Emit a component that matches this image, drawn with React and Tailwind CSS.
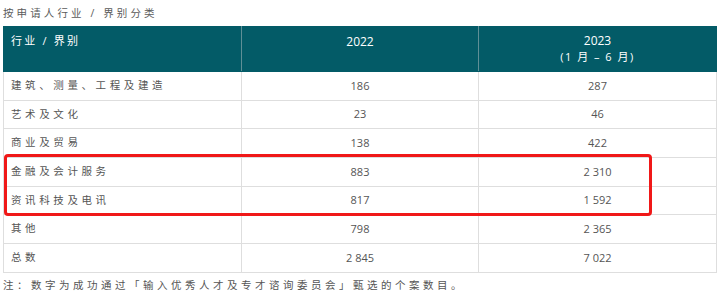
const rows = [
  { name: '建筑、测量、工程及建造', y2022: '186', y2023: '287' },
  { name: '艺术及文化', y2022: '23', y2023: '46' },
  { name: '商业及贸易', y2022: '138', y2023: '422' },
  { name: '金融及会计服务', y2022: '883', y2023: '2 310' },
  { name: '资讯科技及电讯', y2022: '817', y2023: '1 592' },
  { name: '其他', y2022: '798', y2023: '2 365' },
  { name: '总数', y2022: '2 845', y2023: '7 022' },
];

const App = () => {
  return (
    <div
      className="w-[720px] h-[293px] bg-white px-[3px] text-[#555]"
      style={{ fontFamily: '"Open Sans", "Noto Sans CJK SC", sans-serif' }}
    >
      {/* Title */}
      <div className="h-[26px] pt-[4px] text-[10.5px] leading-[18px] tracking-[3.1px] text-[#5a5a5a]">
        按申请人行业 / 界别分类
      </div>

      {/* Table */}
      <div className="relative">
        <table className="w-[714px] border-collapse table-fixed text-[11px]">
          <thead>
            <tr className="bg-[#035b67] text-white h-[45px]">
              <th className="w-[238px] align-top pt-[6px] pl-[7px] text-left font-normal text-[11px] tracking-[2.2px] border border-[#035b67] border-r-[#5f8f96]">
                行业 / 界别
              </th>
              <th className="w-[237px] align-top pt-[6px] text-center font-normal text-[12px] border border-[#035b67] border-r-[#5f8f96]">
                2022
              </th>
              <th className="align-top pt-[6px] text-center font-normal text-[12px] leading-[16px] border border-[#035b67]">
                2023
                <br />
                <span className="text-[11px] tracking-[1.5px]">(1 月 – 6 月)</span>
              </th>
            </tr>
          </thead>
          <tbody>
            {rows.map((row) => (
              <tr key={row.name} className="h-[28.7px]">
                <td className="pl-[7px] text-[10.5px] tracking-[3.6px] border border-[#dedede]">{row.name}</td>
                <td className="text-center border border-[#dedede]">{row.y2022}</td>
                <td className="text-center border border-[#dedede]">{row.y2023}</td>
              </tr>
            ))}
          </tbody>
        </table>

        {/* Highlight box */}
        <div className="absolute left-[1px] top-[128px] w-[648px] h-[62px] border-[3px] border-[#f01818] rounded-[4px] pointer-events-none" />
      </div>

      {/* Footnote */}
      <div className="pt-[3px] text-[10.5px] leading-[18px] tracking-[3.5px]">
        注：数字为成功通过「输入优秀人才及专才谘询委员会」甄选的个案数目。
      </div>
    </div>
  );
};

export default App;
